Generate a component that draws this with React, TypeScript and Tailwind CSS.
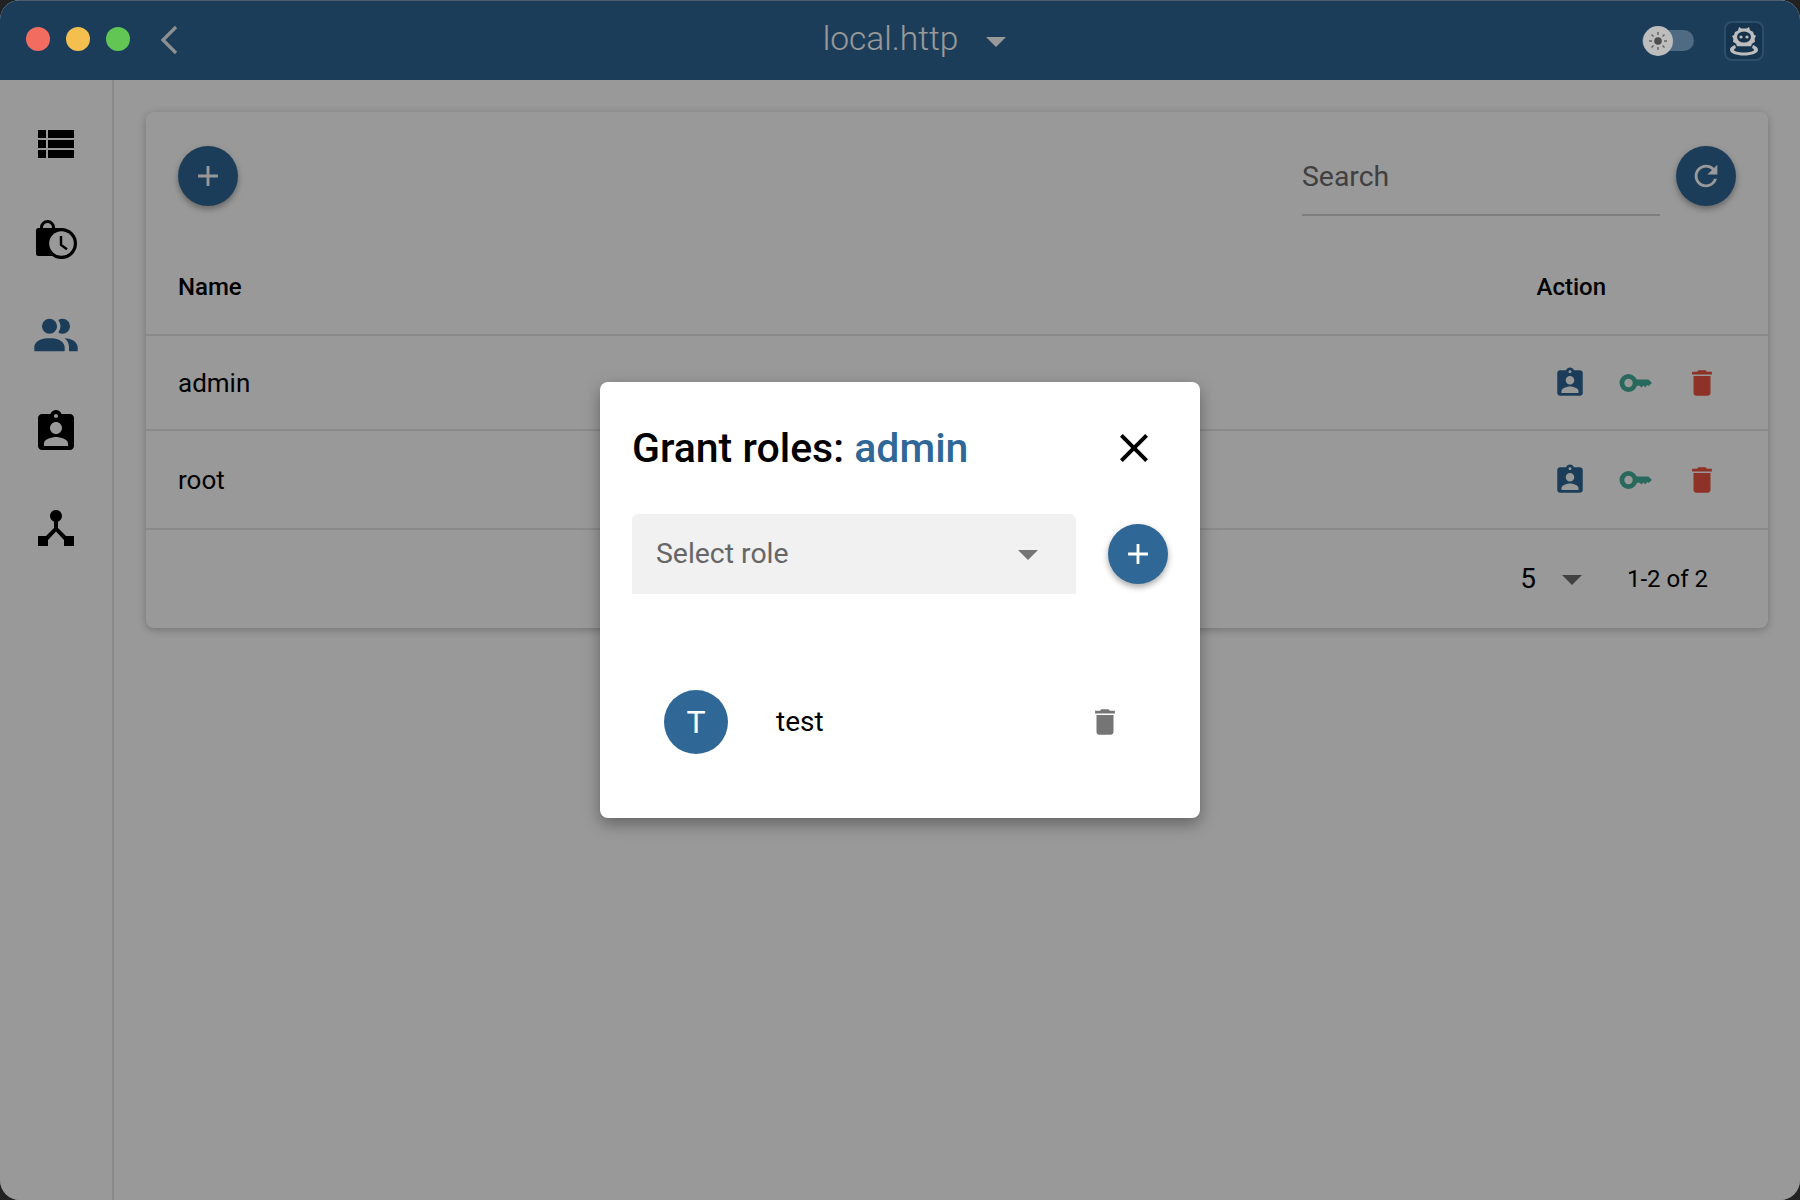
import { MdViewList, MdAssignmentInd, MdDeviceHub, MdDelete, MdAdd, MdRefresh, MdClose, MdArrowDropDown } from "react-icons/md";

function LockClock() {
  return (
    <svg width="48" height="48" viewBox="0 0 48 48" className="block">
      <path d="M8 12V11.500A7.500 7.500 0 0 1 15.500 4A7.500 7.500 0 0 1 23 11.500V13H20V11.500A4.500 4.500 0 0 0 15.500 7A4.500 4.500 0 0 0 11 11.500V12z" fill="#000" />
      <path d="M6.500 12H26a3 3 0 0 1 3 3v25H6.500a2.500 2.500 0 0 1-2.500-2.500V14.500A2.500 2.500 0 0 1 6.500 12z" fill="#000" />
      <circle cx="29.500" cy="27.500" r="15.500" fill="#000" />
      <circle cx="29.500" cy="27.500" r="12.300" fill="#fff" />
      <path d="M29 20v9l6 4.200" fill="none" stroke="#000" strokeWidth="2.400" />
    </svg>
  );
}

function People() {
  return (
    <svg width="52" height="52" viewBox="0 0 24 24" className="block" fill="currentColor">
      <path d="M16 17V19H2V17S2 13 9 13 16 17 16 17M12.500 7.500A3.500 3.500 0 1 0 9 11A3.500 3.500 0 0 0 12.500 7.500M15.940 13A5.320 5.320 0 0 1 18 17V19H22V17S22 13.370 15.940 13M15 4A3.390 3.390 0 0 0 13.070 4.590A5 5 0 0 1 13.070 10.410A3.390 3.390 0 0 0 15 11A3.500 3.500 0 0 0 15 4Z" />
    </svg>
  );
}

function Key() {
  return (
    <svg width="34" height="34" viewBox="0 0 34 34" className="block" fill="currentColor">
      <path fillRule="evenodd" d="M9.500 8a9 9 0 1 1 0 18a9 9 0 0 1 0-18zM9.500 12.800a4.200 4.200 0 1 0 0 8.400a4.200 4.200 0 0 0 0-8.400z" />
      <path d="M15 13.500H29.500L33 17L29.500 20L28 19L26.500 21.500L24.500 19.500L22.500 21.500L20.500 19.800H15z" />
    </svg>
  );
}

function Sun() {
  return (
    <svg width="24" height="24" viewBox="0 0 24 24" className="block">
      <circle cx="12" cy="12" r="3.800" fill="#4d4d4d" />
      <path d="M12 3v3M12 18v3M3 12h3M18 12h3M5.500 5.500l2 2M16.500 16.500l2 2M5.500 18.500l2-2M16.500 7.500l2-2" stroke="#666666" strokeWidth="1.500" fill="none" />
    </svg>
  );
}

function Mascot() {
  return (
    <svg width="30" height="32" viewBox="0 0 30 32" className="block">
      <path d="M10 2l2.400 1.600h5.200L20 2l1 3.200 3 1.600 1 3 2 1-1.400 3 .4 3-3 2-1 2.400H8l-1-2.400-3-2 .4-3L3 11l2-1 1-3 3-1.600z" fill="#bdbdbd" />
      <ellipse cx="15" cy="12" rx="7" ry="5.500" fill="#16324b" />
      <circle cx="12" cy="12" r="1.600" fill="#bdbdbd" />
      <circle cx="18" cy="12" r="1.600" fill="#bdbdbd" />
      <path d="M6 20c-4 1.400-5 3.400-5 5 0 3 6 5.500 14 5.500s14-2.500 14-5.500c0-1.600-1-3.600-5-5l-1 3c1.500.6 2 1.200 2 2 0 1.200-4 2.500-10 2.500s-10-1.300-10-2.500c0-.8.5-1.400 2-2z" fill="#bdbdbd" />
    </svg>
  );
}

function Fab({ children }: { children: React.ReactNode }) {
  return (
    <div className="flex h-[60px] w-[60px] shrink-0 items-center justify-center rounded-full bg-[#2f6796] text-white shadow-[0_3px_6px_rgba(0,0,0,0.35)]">
      {children}
    </div>
  );
}

function Side({ children, active }: { children: React.ReactNode; active?: boolean }) {
  return <div className={`flex h-[96px] items-center justify-center ${active ? "text-[#2f6796]" : "text-black"}`}>{children}</div>;
}

function Row({ name, h }: { name: string; h: string }) {
  return (
    <div className={`flex items-center border-b-2 border-[#e6e6e6] pl-8 ${h}`}>
      <div className="grow pt-[2px] text-[26px] text-black">{name}</div>
      <div className="flex items-center pr-[33px]">
        <div className="flex w-[66px] justify-center text-[#2f6796]"><MdAssignmentInd size={34} /></div>
        <div className="flex w-[66px] justify-center text-[#45ae9a]"><Key /></div>
        <div className="flex w-[66px] justify-center text-[#ed5240]"><MdDelete size={34} /></div>
      </div>
    </div>
  );
}

export default function App() {
  return (
    <div className="relative h-[1200px] w-[1800px] overflow-hidden bg-[#222222] font-['Roboto',sans-serif]">
      <div className="flex h-full w-full flex-col overflow-hidden rounded-[20px] bg-white">
        <header className="flex h-[80px] shrink-0 items-center border-t border-[#7f9cb5] bg-[#2f6796] pl-[26px] pr-[36px]">
          <div className="relative z-30 -mt-1 flex gap-[16px]">
            <span className="h-6 w-6 rounded-full bg-[#f26d60]" />
            <span className="h-6 w-6 rounded-full bg-[#f5bf4f]" />
            <span className="h-6 w-6 rounded-full bg-[#61c654]" />
          </div>
          <svg width="20" height="30" viewBox="0 0 20 30" className="-mt-0.5 ml-[30px]">
            <path d="M16 2L3 15l13 13" fill="none" stroke="#f0f0f0" strokeWidth="3.200" />
          </svg>
          <div className="flex grow items-center justify-center pl-[21px]">
            <span className="-mt-0.5 text-[33.500px] font-light text-white">local.http</span>
            <MdArrowDropDown size={48} className="ml-[14px] text-white" />
          </div>
          <div className="relative flex h-[21px] w-[52px] items-center rounded-full bg-[#84b1da]">
            <div className="absolute left-[1px] z-30 flex h-[30px] w-[30px] items-center justify-center rounded-full bg-[#bdbdbd]"><Sun /></div>
          </div>
          <div className="ml-[30px] flex h-10 w-10 items-center justify-center rounded-lg border-2 border-[#4b82b2] bg-[#265782]">
            <div className="relative z-30"><Mascot /></div>
          </div>
        </header>
        <div className="flex min-h-0 grow">
          <aside className="w-[114px] shrink-0 border-r-2 border-[#e6e6e6] pt-4">
            <Side><MdViewList size={48} /></Side>
            <Side><LockClock /></Side>
            <Side active><People /></Side>
            <Side><MdAssignmentInd size={48} /></Side>
            <Side><MdDeviceHub size={48} /></Side>
          </aside>
          <main className="grow p-8">
            <section className="rounded-lg bg-white shadow-[0_2px_8px_rgba(0,0,0,0.25)]">
              <div className="flex h-[126px] items-start px-8 pt-[34px]">
                <Fab><MdAdd size={34} /></Fab>
                <div className="grow" />
                <div className="flex h-[70px] w-[358px] items-center border-b-2 border-[#d0d0d0] pb-[6px] text-[28.400px] text-[#6b6b6b]">Search</div>
                <div className="ml-4"><Fab><MdRefresh size={34} /></Fab></div>
              </div>
              <div className="flex h-[98px] items-center border-b-2 border-[#e6e6e6] pl-8 pr-[162px] pt-[2px] text-[24px] font-medium text-black">
                <div className="grow">Name</div>
                <div>Action</div>
              </div>
              <Row name="admin" h="h-[95px]" />
              <Row name="root" h="h-[99px]" />
              <div className="flex h-[98px] items-center justify-end pr-[60px] text-black">
                <span className="text-[28px]">5</span>
                <MdArrowDropDown size={48} className="ml-[12px] text-[#6e6e6e]" />
                <span className="ml-[31px] text-[24px]">1-2 of 2</span>
              </div>
            </section>
          </main>
        </div>
      </div>
      <div className="absolute inset-0 z-20 flex items-center justify-center rounded-[20px] bg-black/40">
        <div className="w-[600px] rounded-lg bg-white p-8 pb-16 shadow-[0_6px_16px_rgba(0,0,0,0.35)]">
          <div className="flex h-[68px] items-center">
            <div className="grow pt-[2px] text-[41px] font-medium text-black">Grant roles: <span className="text-[#2f6796]">admin</span></div>
            <MdClose size={48} className="mr-[10px] text-black" />
          </div>
          <div className="mt-8 flex items-center gap-8">
            <div className="flex h-20 w-[444px] items-center rounded-t-md bg-[#f1f1f1] pl-6 pr-[24px] text-[28.400px] text-[#666666]">
              <span className="grow">Select role</span>
              <MdArrowDropDown size={48} className="text-[#757575]" />
            </div>
            <Fab><MdAdd size={34} /></Fab>
          </div>
          <div className="ml-8 mt-24 flex h-16 items-center">
            <div className="flex h-16 w-16 items-center justify-center rounded-full bg-[#2f6796] text-[32px] text-white">T</div>
            <div className="ml-12 grow text-[28px] text-black">test</div>
            <MdDelete size={34} className="mr-[46px] text-[#757575]" />
          </div>
        </div>
      </div>
    </div>
  );
}
